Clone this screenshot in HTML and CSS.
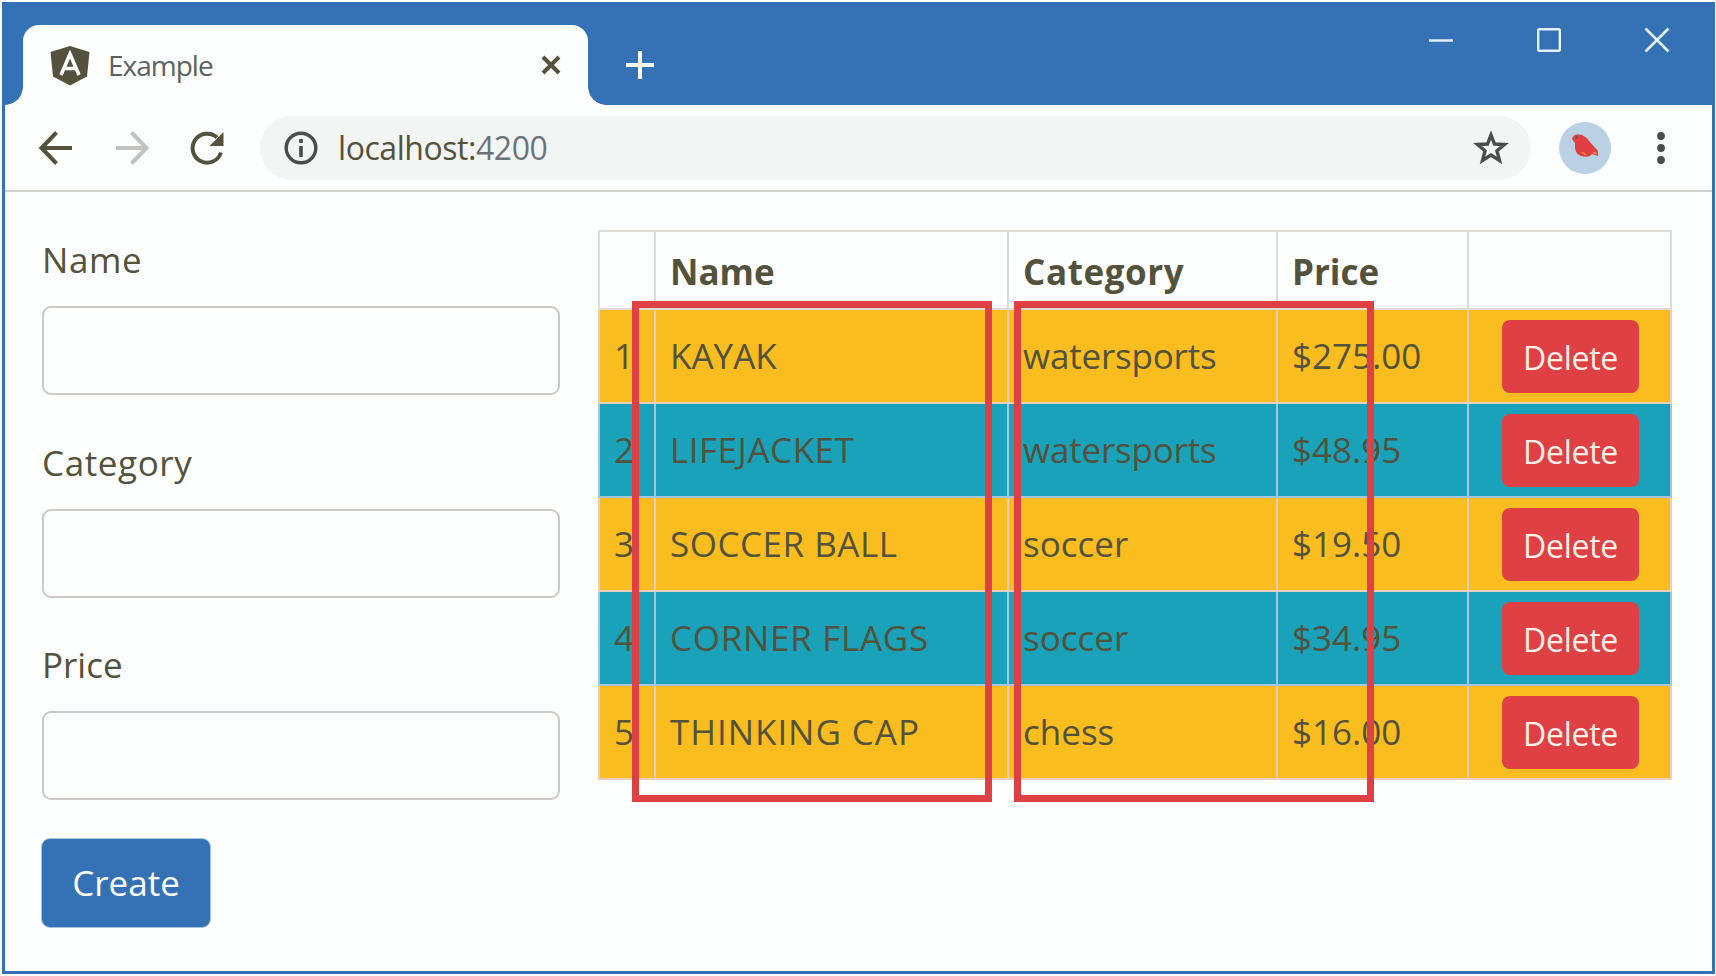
FILE: index.html
```html
<!DOCTYPE html>
<html lang="en">
<head>
<meta charset="utf-8">
<title>Example</title>
<link rel="stylesheet" href="styles.css">
</head>
<body>
<div class="window">
  <header class="tabstrip">
    <div class="tab">
      <svg class="logo" width="40" height="40" viewBox="0 0 40 40"><path d="M20 0 39.500 6 37 30.500 20 39.500 3 30.500 .5 6Z" fill="#53523c"/><path d="M11 29 20 8 29 29M14.500 22.500H25.500" fill="none" stroke="#fdfefe" stroke-width="3.600"/></svg>
      <span class="tab-title">Example</span>
      <svg class="tab-close" width="20" height="20" viewBox="0 0 20 20"><path d="M2 2 18 18M18 2 2 18" stroke="#53523c" stroke-width="4"/></svg>
    </div>
    <svg class="new-tab" width="28" height="28" viewBox="0 0 28 28"><path d="M14 0V28M0 14H28" stroke="#fdfefe" stroke-width="4"/></svg>
    <div class="controls">
      <svg width="24" height="24" viewBox="0 0 24 24"><path d="M0 12.500H24" stroke="#e4eef6" stroke-width="2.500"/></svg>
      <svg width="24" height="24" viewBox="0 0 24 24"><rect x="1.200" y="1.200" width="21.600" height="21.600" rx="1" fill="none" stroke="#e4eef6" stroke-width="2.400"/></svg>
      <svg width="24" height="24" viewBox="0 0 24 24"><path d="M.5.500 23.500 23.500M23.500.500.500 23.500" stroke="#e4eef6" stroke-width="2.600"/></svg>
    </div>
  </header>
  <div class="toolbar">
    <svg class="back" width="34" height="34" viewBox="0 0 34 34"><path d="M33 17H3M17.500 1.500 2.500 17 17.500 32.500" fill="none" stroke="#53523c" stroke-width="4"/></svg>
    <svg class="forward" width="34" height="34" viewBox="0 0 34 34"><path d="M1 17H31M16.500 1.500 31.500 17 16.500 32.500" fill="none" stroke="#c2c3c1" stroke-width="4"/></svg>
    <svg class="reload" width="34" height="34" viewBox="0 0 34 34"><path d="M31 21.500A14.500 14.500 0 1 1 27 6.500" fill="none" stroke="#53523c" stroke-width="4"/><path d="M33.500 1V15H19.500Z" fill="#53523c"/></svg>
    <div class="address">
      <svg class="info" width="34" height="34" viewBox="0 0 34 34"><circle cx="17" cy="17" r="14.800" fill="none" stroke="#494e4c" stroke-width="3.400"/><path d="M17 15V26M17 8V12" stroke="#494e4c" stroke-width="3.600"/></svg>
      <span class="url">localhost:<span class="port">4200</span></span>
      <svg class="star" width="34" height="34" viewBox="0 0 34 34"><path d="M17 4 20.500 13 30.500 13.500 23 19.800 25.500 29.500 17 24 8.500 29.500 11 19.800 3.500 13.500 13.500 13Z" fill="none" stroke="#494e4c" stroke-width="3.400"/></svg>
    </div>
    <svg class="avatar" width="52" height="52" viewBox="0 0 52 52"><circle cx="26" cy="26" r="26" fill="#b9d1e2"/><path d="M13 17Q14 12 20 12.500Q26 13 30 19L39 29V34L33 32Q30 36 22 34Q15 32 16 21Z" fill="#de4044"/><circle cx="17.500" cy="15.500" r="1" fill="#53523c"/><path d="M23 30 27 33M34 30.500 38 31.500" stroke="#ea9233" stroke-width="1.500"/></svg>
    <svg class="menu" width="8" height="34" viewBox="0 0 8 34"><g fill="#494e4c"><circle cx="4" cy="5" r="3.900"/><circle cx="4" cy="17" r="3.900"/><circle cx="4" cy="29" r="3.900"/></g></svg>
  </div>
  <main class="page">
    <form class="form">
      <label class="field"><span class="label-name">Name</span><input type="text"></label>
      <label class="field"><span class="label-category">Category</span><input type="text"></label>
      <label class="field"><span class="label-price">Price</span><input type="text"></label>
      <button type="button" class="create">Create</button>
    </form>
    <div class="products">
      <table>
        <colgroup><col class="c1"><col class="c2"><col class="c3"><col class="c4"><col class="c5"></colgroup>
        <thead><tr><th></th><th>Name</th><th class="head-category">Category</th><th>Price</th><th></th></tr></thead>
        <tbody>
          <tr class="warning"><td>1</td><td>KAYAK</td><td class="category">watersports</td><td>$275.00</td><td class="action"><button type="button" class="delete">Delete</button></td></tr>
          <tr class="info-row"><td>2</td><td class="name">LIFEJACKET</td><td class="category">watersports</td><td>$48.95</td><td class="action"><button type="button" class="delete">Delete</button></td></tr>
          <tr class="warning"><td>3</td><td class="name">SOCCER BALL</td><td>soccer</td><td>$19.50</td><td class="action"><button type="button" class="delete">Delete</button></td></tr>
          <tr class="info-row"><td>4</td><td class="name name-wide">CORNER FLAGS</td><td>soccer</td><td>$34.95</td><td class="action"><button type="button" class="delete">Delete</button></td></tr>
          <tr class="warning"><td>5</td><td class="name name-wider">THINKING CAP</td><td>chess</td><td>$16.00</td><td class="action"><button type="button" class="delete">Delete</button></td></tr>
        </tbody>
      </table>
      <div class="callout callout-name"></div>
      <div class="callout callout-category"></div>
    </div>
  </main>
</div>
</body>
</html>
```
FILE: styles.css
```css
* { box-sizing: border-box; }
body {
  margin: 0;
  padding: 2px 1px 2px 2px;
  height: 976px;
  overflow: hidden;
  background: #fdfefe;
  color: #53523c;
  font-family: "Open Sans", "Noto Sans", sans-serif;
  font-size: 35px;
}
svg { display: block; flex: none; overflow: visible; }
.window { height: 972px; border: 3px solid #3572b5; border-top: 0; background: #fdfefe; }

.tabstrip { display: flex; height: 103px; background: #3572b5; padding: 23px 43px 0 18px; }
.tab {
  position: relative;
  display: flex;
  align-items: center;
  width: 565px;
  height: 80px;
  padding: 0 27px 0 27px;
  border-radius: 16px 16px 0 0;
  background: #fdfefe;
}
.tab::before, .tab::after { content: ""; position: absolute; bottom: 0; width: 18px; height: 18px; }
.tab::before { left: -18px; background: radial-gradient(circle at 0 0, #3572b5 17.5px, #fdfefe 18px); }
.tab::after { right: -18px; background: radial-gradient(circle at 100% 0, #3572b5 17.5px, #fdfefe 18px); }
.logo { margin-top: 1px; }
.tab-title { margin-left: 18px; font-size: 28px; letter-spacing: -1px; line-height: 40px; color: #5c6263; }
.tab-close { margin-left: auto; }
.new-tab { margin: 26px 0 0 38px; }
.controls { display: flex; gap: 84px; margin: 3px 0 0 auto; }

.toolbar { display: flex; align-items: center; height: 87px; padding: 0 46px 0 34px; border-bottom: 2px solid #d2d0cc; }
.forward { margin-left: 42px; }
.reload { margin-left: 41px; }
.address { display: flex; align-items: center; width: 1271px; height: 64px; margin-left: 36px; padding: 0 23px 0 24px; border-radius: 32px; background: #f3f4f4; }
.url { margin-left: 20px; font-size: 32px; letter-spacing: -0.45px; line-height: 44px; }
.port { color: #6d7479; }
.star { margin-left: auto; }
.avatar { margin-left: 28px; }
.menu { margin-left: 46px; }

.page { display: flex; padding: 38px 0 0 37px; }
.form { width: 517px; }
.field { display: block; height: 202.5px; padding-top: 5px; }
.field span { display: block; height: 71px; line-height: 50px; }
.field .label-name { letter-spacing: 0.6px; }
.field .label-category { letter-spacing: 0.6px; }
.field input { display: block; width: 518px; height: 89px; margin: 0; border: 2px solid #ccc9c5; border-radius: 9px; background: #fdfefe; }
.create { display: block; width: 170px; height: 90px; margin: 0 0 0 -1px; padding: 0; border: 1px solid #a5c6df; border-radius: 9px; background: #3572b5; color: #fdfefe; font: inherit; }

.products { position: relative; width: 1072px; margin-left: 39px; }
table { width: 1072px; table-layout: fixed; border-collapse: collapse; }
.c1 { width: 56px; } .c2 { width: 353px; } .c3 { width: 269px; } .c4 { width: 191px; } .c5 { width: 203px; }
th, td { padding: 0 0 0 14px; text-align: left; line-height: 48px; border: 2px solid #dfdcd8; white-space: nowrap; }
th { padding-top: 3px; }
.head-category { letter-spacing: 0.6px; }
.category { letter-spacing: -0.2px; }
.name { letter-spacing: 0.5px; }
.name-wide { letter-spacing: 0.7px; }
.name-wider { letter-spacing: 0.95px; }
thead tr { height: 78px; }
tbody tr { height: 94px; }
.warning td { background: #f9bd20; border-color: #e6cfbf; }
.info-row td { background: #19a2b9; border-color: #a9c5df; }
td.action { padding: 0; }
.delete { display: block; width: 137px; height: 73px; margin: 0 auto 0 33px; padding: 3px 0 0; border: 0; border-radius: 8px; background: #de4044; color: #fbefe8; font: inherit; font-size: 32px; letter-spacing: -0.3px; }
.callout { position: absolute; top: 71px; width: 360px; height: 501px; border: 7px solid #de4044; }
.callout-name { left: 34px; }
.callout-category { left: 416px; }
```
